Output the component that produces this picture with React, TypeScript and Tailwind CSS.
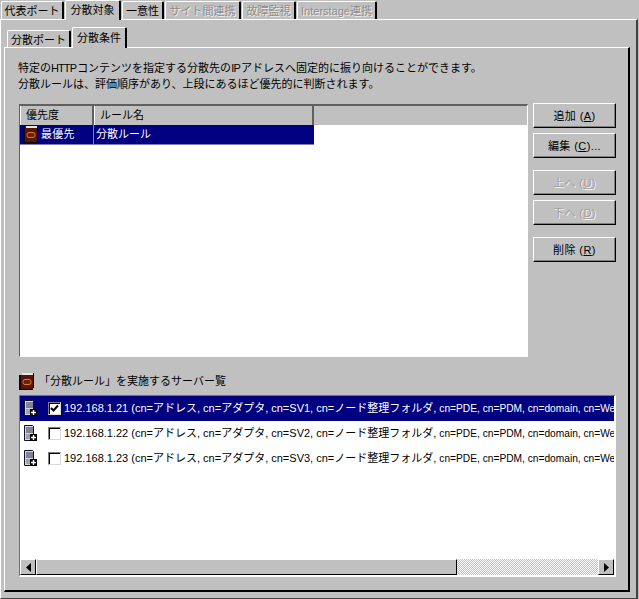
import React from "react";

const FONT = "[font-family:'Liberation_Sans','Noto_Sans_CJK_JP',sans-serif]";

function Tab({ w, h, label, active, disabled, mt }: { w: string; h: string; label: string; active?: boolean; disabled?: boolean; mt: string }) {
  return (
    <div
      className={`${w} ${h} ${mt} flex items-center justify-center shrink-0 bg-[#c0c0c0] border-t border-l border-white border-r-2 border-r-black rounded-tl-[2px] rounded-tr-[2px] ${
        active ? "z-10 relative" : "pt-[1px]"
      } ${disabled ? "text-[#8c8c8c] [text-shadow:1px_1px_0_#f0f0f0]" : "text-black"}`}
    >
      {label}
    </div>
  );
}

function Btn({ children, disabled, className = "" }: { children: React.ReactNode; disabled?: boolean; className?: string }) {
  return (
    <div
      className={`w-[83px] h-[25px] pt-[2px] tracking-[0.4px] flex items-center justify-center border-t border-l border-white border-r border-b border-r-black border-b-black shadow-[inset_-1px_-1px_0_#808080] ${
        disabled ? "text-[#a0a0a0] [text-shadow:1px_1px_0_#f4f4f4]" : "text-black"
      } ${className}`}
    >
      {children}
    </div>
  );
}

function BookIcon({ className = "" }: { className?: string }) {
  return (
    <svg width="15" height="17" viewBox="0 0 15 17" className={`shrink-0 ${className}`}>
      <path d="M3 0h11v2H3z" fill="#e8e8e8" />
      <path d="M14 0h1v15h-1z" fill="#000" />
      <path d="M1 2h13v14H1z" fill="#5a1408" />
      <path d="M0 2h2v15H0z" fill="#1a0500" />
      <path d="M2 16h12v1H2z" fill="#000" />
      <rect x="4" y="6.5" width="8" height="5" rx="2" fill="#6a2008" stroke="#d88030" strokeWidth="1" />
    </svg>
  );
}

function ServerIcon() {
  return (
    <svg width="13" height="17" viewBox="0 0 13 17" className="shrink-0">
      <path d="M.5.5h8l1 1v14H.5z" fill="#d4d4dc" stroke="#101020" strokeWidth="1" />
      <path d="M2 3h7M2 5h7M2 7h7" stroke="#303050" strokeWidth="1" />
      <path d="M2 9h6v5H2z" fill="#a0a0b4" />
      <path d="M6 9h7v7H6z" fill="#000" />
      <path d="M9.5 10v5M7 12.5h5" stroke="#fff" strokeWidth="1.4" />
    </svg>
  );
}

function Check({ checked }: { checked?: boolean }) {
  return (
    <div className="w-[13px] h-[13px] shrink-0 bg-white border-t border-l border-[#808080] border-r border-b border-r-[#d8d8d8] border-b-[#d8d8d8] shadow-[inset_1px_1px_0_#000] flex items-center justify-center">
      {checked && (
        <svg width="9" height="9" viewBox="0 0 9 9">
          <path d="M1 4l2.5 2.5L8 1.5" fill="none" stroke="#000" strokeWidth="2" />
        </svg>
      )}
    </div>
  );
}

function HeaderCell({ w, label }: { w: string; label: string }) {
  return (
    <div className={`${w} h-[19px] shrink-0 flex items-center pl-[5px] pb-[1px] border-l border-white border-r-2 border-r-[#606060]`}>
      {label}
    </div>
  );
}

function Row({ n, selected }: { n: number; selected?: boolean }) {
  return (
    <div className={`h-[25px] flex items-center whitespace-nowrap overflow-hidden pl-[4px] gap-[11px] ${selected ? "bg-[#000080] text-white" : "text-black"}`}>
      <ServerIcon />
      <div className="flex items-center gap-[3px]">
        <Check checked={selected} />
        <span>
          {`192.168.1.2${n} (cn=アドレス, cn=アダプタ, cn=SV${n}, cn=ノード整理フォルダ, `}
          <span className="text-[10.2px]">cn=PDE, cn=PDM, cn=domain, cn=WebSphere</span>
        </span>
      </div>
    </div>
  );
}

function ScrollBtn({ dir }: { dir: "l" | "r" }) {
  return (
    <div className="w-[16px] h-[16px] shrink-0 bg-[#c0c0c0] border-t border-l border-white border-r border-b border-r-black border-b-black flex items-center justify-center">
      <svg width="5" height="9" viewBox="0 0 5 9">
        <path d={dir === "l" ? "M5 0v9L0 4.5z" : "M0 0v9l5-4.5z"} fill="#000" />
      </svg>
    </div>
  );
}

export default function App() {
  return (
    <div className={`${FONT} w-[639px] h-[599px] bg-[#c0c0c0] text-[11px] leading-none flex flex-col overflow-hidden`}>
      <div className="flex h-[20px] items-start pl-[1px] gap-[1px] -mb-px">
        <Tab w="w-[63px]" h="h-[19px]" mt="mt-[1px]" label="代表ポート" />
        <Tab w="w-[56px]" h="h-[20px]" mt="" label="分散対象" active />
        <Tab w="w-[42px]" h="h-[19px]" mt="mt-[1px]" label="一意性" />
        <Tab w="w-[76px]" h="h-[19px]" mt="mt-[1px]" label="サイト間連携" disabled />
        <Tab w="w-[54px]" h="h-[19px]" mt="mt-[1px]" label="故障監視" disabled />
        <Tab w="w-[80px]" h="h-[19px]" mt="mt-[1px]" label="Interstage連携" disabled />
      </div>
      <div className="w-[638px] h-[580px] border-t border-l border-white border-r-2 border-r-[#404040] border-b border-b-[#404040] pt-[7px] flex flex-col shrink-0">
        <div className="flex h-[21px] items-start pl-[6px] gap-[1px] -mb-px">
          <Tab w="w-[64px]" h="h-[18px]" mt="mt-[3px]" label="分散ポート" />
          <Tab w="w-[55px]" h="h-[21px]" mt="" label="分散条件" active />
        </div>
        <div className="ml-[3px] w-[626px] h-[545px] border-t border-l border-white border-r-2 border-r-black border-b-2 border-b-black pl-[14px] flex flex-col">
          <div className="pt-[12px] h-[56px] -ml-px leading-[16px]">
            <p className="h-[16px]">
              特定の<span className="tracking-[-0.9px]">HTTP</span>
              <span className="ml-[1px]">コンテンツを指定する分散先の</span>
              <span className="tracking-[-0.8px]">IP</span>
              <span className="ml-[1px]">アドレスへ固定的に振り向けることができます。</span>
            </p>
            <p className="h-[16px]">分散ルールは、評価順序があり、上段にあるほど優先的に判断されます。</p>
          </div>
          <div className="flex gap-[5px] h-[253px]">
            <div className="w-[509px] h-[253px] border-t-2 border-l border-[#606060] border-r border-b border-r-white border-b-white bg-white flex flex-col">
              <div className="flex h-[19px] bg-[#c0c0c0] shrink-0">
                <HeaderCell w="w-[74px]" label="優先度" />
                <HeaderCell w="w-[220px]" label="ルール名" />
              </div>
              <div className="flex w-[294px] h-[20px] bg-[#000080] text-white border-b border-[#8080b0]">
                <div className="w-[74px] flex items-center gap-[3px] pl-[3px] border-r border-[#8080b0]">
                  <BookIcon />
                  <span className="tracking-[0.3px]">最優先</span>
                </div>
                <div className="flex items-center pl-[2px]">分散ルール</div>
              </div>
            </div>
            <div className="flex flex-col">
              <Btn className="-mt-px">
                <span>
                  追加 (<u>A</u>)
                </span>
              </Btn>
              <Btn className="mt-[5px]">
                <span>
                  編集 (<u>C</u>)...
                </span>
              </Btn>
              <Btn disabled className="mt-[12px]">
                <span>
                  上へ (<u>U</u>)
                </span>
              </Btn>
              <Btn disabled className="mt-[5px]">
                <span>
                  下へ (<u>D</u>)
                </span>
              </Btn>
              <Btn className="mt-[12px]">
                <span>
                  削除 (<u>R</u>)
                </span>
              </Btn>
            </div>
          </div>
          <div className="flex items-center h-[38px] gap-[5px] pt-[10px]">
            <BookIcon />
            <span>「分散ルール」を実施するサーバー覧</span>
          </div>
          <div className="w-[597px] h-[182px] border-t border-l border-[#707070] border-r-2 border-b-2 border-r-white border-b-white bg-white flex flex-col">
            <div className="flex-1 min-h-0 overflow-hidden">
              <Row n={1} selected />
              <Row n={2} />
              <Row n={3} />
            </div>
            <div className="flex h-[16px] shrink-0">
              <ScrollBtn dir="l" />
              <div className="w-[421px] h-[16px] bg-[#c0c0c0] border-t border-l border-white border-r border-b border-r-black border-b-black" />
              <div className="flex-1 bg-[repeating-conic-gradient(#c0c0c0_0%_25%,#fff_0%_50%)] bg-size-[2px_2px]" />
              <ScrollBtn dir="r" />
            </div>
          </div>
        </div>
      </div>
    </div>
  );
}
